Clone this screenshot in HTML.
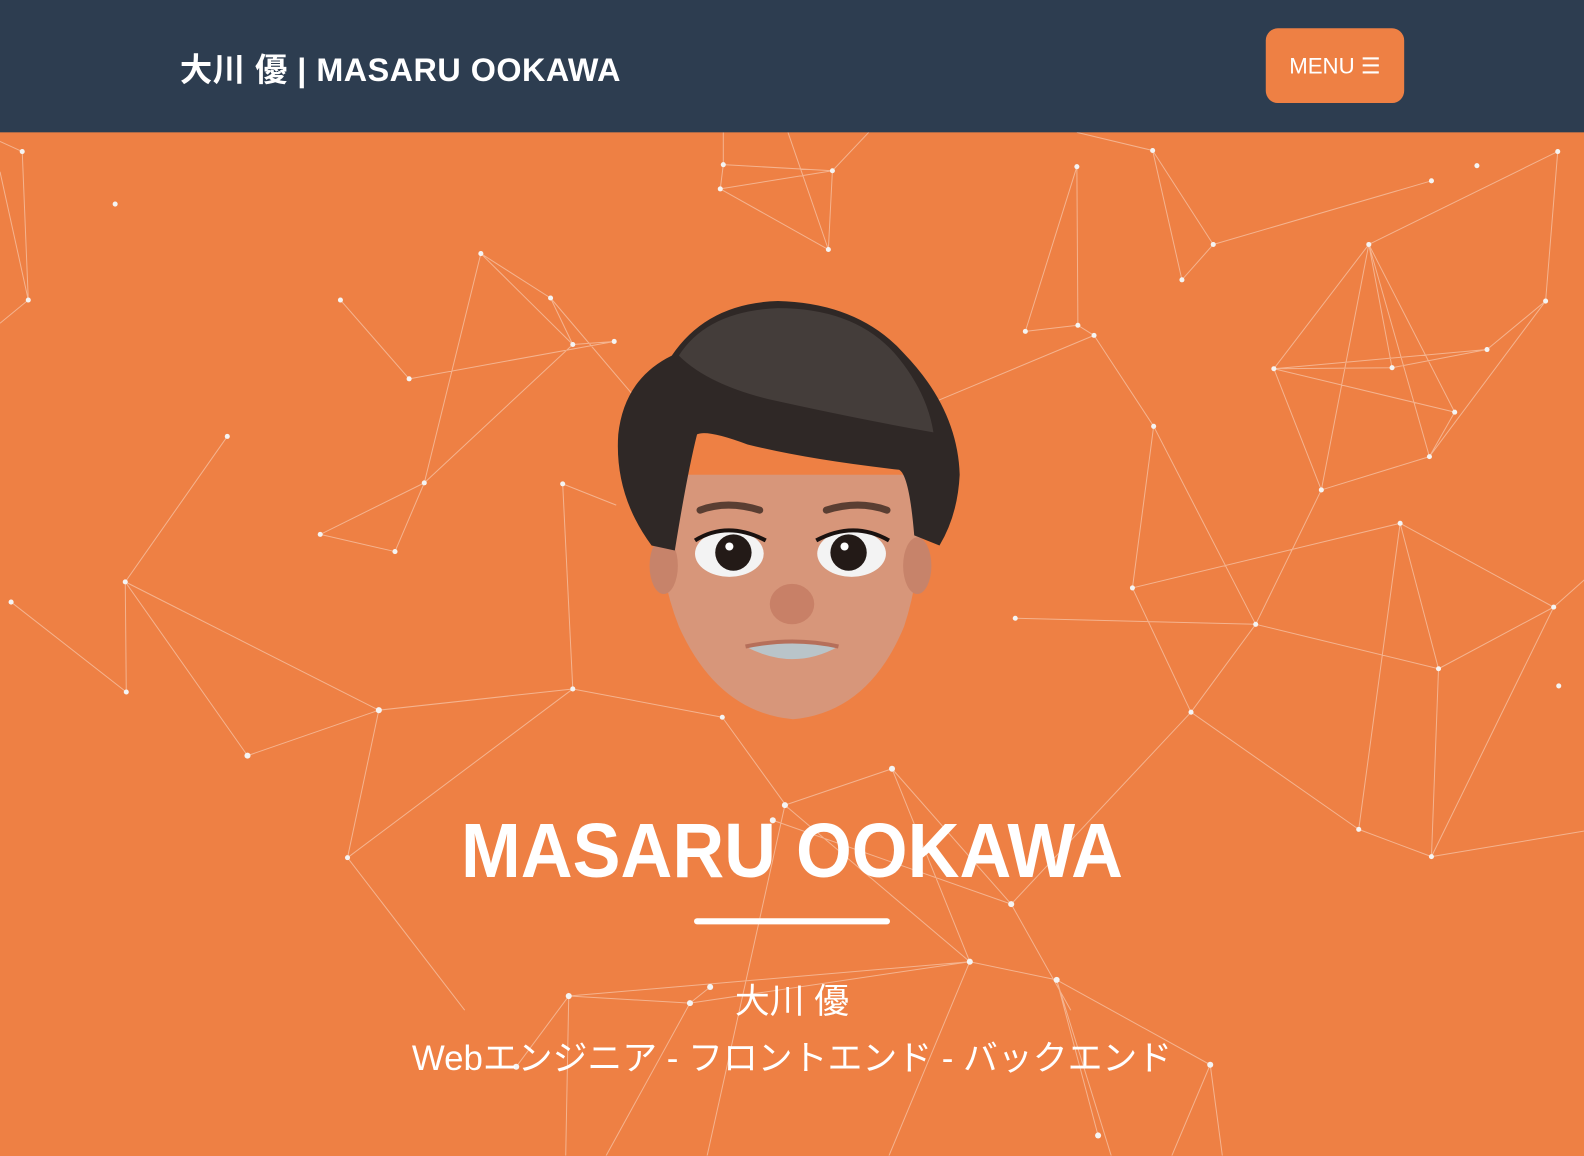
<!DOCTYPE html>
<html><head><meta charset="utf-8"><style>
html,body{margin:0;padding:0;width:1584px;height:1144px;overflow:hidden;background:#ee8044;font-family:"Liberation Sans","Noto Sans CJK JP",sans-serif}
#wrap{position:absolute;left:0;top:0;width:1568px;height:1133px;transform:scale(1.0102);transform-origin:0 0}
header{position:absolute;left:0;top:0;width:1568px;height:131px;background:#2d3d50;z-index:3}
.logo{position:absolute;left:178px;top:44px;color:#fff;font-weight:bold;font-size:32px;letter-spacing:0.5px;white-space:nowrap}
.menu{position:absolute;left:1253px;top:28px;width:137px;height:74px;background:#ee8044;border-radius:12px;color:#fff;font-size:22px;line-height:76px;text-align:center}
#net{position:absolute;left:0;top:0;z-index:1}
.t{position:absolute;left:0;width:1568px;text-align:center;color:#fff;z-index:2;white-space:nowrap}
h1{margin:0;font-size:76px;font-weight:bold;transform:scaleX(0.935);top:799px}
.bar{position:absolute;left:687px;top:909px;width:194px;height:6px;border-radius:3px;background:#fff;z-index:2}
</style></head><body><div id="wrap">
<header><div class="logo">大川 優 | MASARU OOKAWA</div><div class="menu">MENU ☰</div></header>
<svg id="net" width="1584" height="1144" viewBox="0 0 1584 1144">
<g stroke="rgba(255,255,255,0.4)" stroke-width="1" fill="none">
<path d="M22 150L28 297M0 140L22 150M0 320L28 297M0 170L28 297M337 297L405 375M476 251L545 295M476 251L567 341M545 295L567 341M567 341L608 338M545 295L630 395M476 251L420 478M567 341L420 478M420 478L317 529M420 478L391 546M317 529L391 546M405 375L608 338M225 432L124 576M11 596L125 685M124 576L125 685M124 576L375 703M124 576L245 748M245 748L375 703M375 703L567 682M375 703L344 849M557 479L567 682M557 479L610 500M567 682L715 710M715 710L780 800M567 682L344 849M344 849L460 1000M716 163L713 187M713 187L824 169M716 163L824 169M824 169L820 247M713 187L820 247M716 163L716 131M824 169L860 131M780 131L820 247M1066 165L1015 328M1066 165L1067 322M1067 322L1083 332M1015 328L1067 322M1141 149L1201 242M1201 242L1170 277M1066 131L1141 149M1141 149L1170 277M1083 332L1142 422M1083 332L920 400M1142 422L1121 582M1142 422L1243 618M1121 582L1179 705M1005 612L1243 618M1121 582L1386 518M1243 618L1179 705M1179 705L1345 821M1355 242L1261 365M1355 242L1378 364M1355 242L1440 408M1355 242L1415 452M1261 365L1378 364M1261 365L1440 408M1261 365L1472 346M1378 364L1472 346M1472 346L1530 298M1530 298L1542 150M1542 150L1355 242M1530 298L1415 452M1308 485L1415 452M1308 485L1261 365M1308 485L1355 242M1440 408L1415 452M1308 485L1243 618M1201 242L1417 179M1386 518L1538 601M1386 518L1424 662M1538 601L1424 662M1424 662L1417 848M1417 848L1538 601M1386 518L1345 821M1345 821L1417 848M1243 618L1424 662M1538 601L1584 560M1417 848L1584 820M883 761L777 797M883 761L1001 895M883 761L960 952M777 797L960 952M765 812L1001 895M960 952L1046 970M1046 970L1087 1124M1046 970L1198 1054M563 986L683 993M683 993L703 977M683 993L960 952M563 986L960 952M511 1056L563 986M563 986L560 1144M683 993L600 1144M777 797L700 1144M1198 1054L1210 1144M1179 705L1001 895M1046 970L1100 1144M1198 1054L1160 1144M960 952L880 1144M1001 895L1060 1000"/>
</g>
<g fill="#f4f4f4">
<circle cx="22" cy="150" r="2.5"/><circle cx="28" cy="297" r="2.5"/><circle cx="114" cy="202" r="2.5"/><circle cx="337" cy="297" r="2.5"/><circle cx="405" cy="375" r="2.5"/><circle cx="476" cy="251" r="2.5"/><circle cx="545" cy="295" r="2.5"/><circle cx="567" cy="341" r="2.5"/><circle cx="608" cy="338" r="2.5"/><circle cx="420" cy="478" r="2.5"/><circle cx="317" cy="529" r="2.5"/><circle cx="391" cy="546" r="2.5"/><circle cx="225" cy="432" r="2.5"/><circle cx="124" cy="576" r="2.5"/><circle cx="11" cy="596" r="2.5"/><circle cx="125" cy="685" r="2.5"/><circle cx="245" cy="748" r="3"/><circle cx="375" cy="703" r="3"/><circle cx="557" cy="479" r="2.5"/><circle cx="567" cy="682" r="2.5"/><circle cx="715" cy="710" r="2.5"/><circle cx="344" cy="849" r="2.5"/><circle cx="716" cy="163" r="2.5"/><circle cx="713" cy="187" r="2.5"/><circle cx="824" cy="169" r="2.5"/><circle cx="820" cy="247" r="2.5"/><circle cx="1066" cy="165" r="2.5"/><circle cx="1015" cy="328" r="2.5"/><circle cx="1067" cy="322" r="2.5"/><circle cx="1083" cy="332" r="2.5"/><circle cx="1141" cy="149" r="2.5"/><circle cx="1201" cy="242" r="2.5"/><circle cx="1170" cy="277" r="2.5"/><circle cx="1142" cy="422" r="2.5"/><circle cx="1121" cy="582" r="2.5"/><circle cx="1005" cy="612" r="2.5"/><circle cx="1243" cy="618" r="2.5"/><circle cx="1179" cy="705" r="2.5"/><circle cx="1355" cy="242" r="2.5"/><circle cx="1261" cy="365" r="2.5"/><circle cx="1378" cy="364" r="2.5"/><circle cx="1472" cy="346" r="2.5"/><circle cx="1440" cy="408" r="2.5"/><circle cx="1415" cy="452" r="2.5"/><circle cx="1308" cy="485" r="2.5"/><circle cx="1530" cy="298" r="2.5"/><circle cx="1542" cy="150" r="2.5"/><circle cx="1417" cy="179" r="2.5"/><circle cx="1462" cy="164" r="2.5"/><circle cx="1386" cy="518" r="2.5"/><circle cx="1538" cy="601" r="2.5"/><circle cx="1424" cy="662" r="2.5"/><circle cx="1345" cy="821" r="2.5"/><circle cx="1417" cy="848" r="2.5"/><circle cx="1543" cy="679" r="2.5"/><circle cx="883" cy="761" r="3"/><circle cx="777" cy="797" r="3"/><circle cx="765" cy="812" r="3"/><circle cx="1001" cy="895" r="3"/><circle cx="960" cy="952" r="3"/><circle cx="1046" cy="970" r="3"/><circle cx="563" cy="986" r="3"/><circle cx="683" cy="993" r="3"/><circle cx="703" cy="977" r="3"/><circle cx="1198" cy="1054" r="3"/><circle cx="511" cy="1056" r="3"/><circle cx="1087" cy="1124" r="3"/>
</g>
<g>
<path d="M650 470 Q648 560 672 620 Q710 705 785 712 Q860 705 895 620 Q915 560 912 470 Z" fill="#d7967a"/>
<ellipse cx="657" cy="560" rx="14" ry="28" fill="#c7836a"/>
<ellipse cx="908" cy="560" rx="14" ry="28" fill="#c7836a"/>
<path d="M645 540 Q608 490 612 430 Q618 375 665 352 Q700 300 770 298 Q850 300 895 350 Q948 405 950 470 Q948 510 930 540 L905 530 Q900 470 890 465 Q800 455 740 440 Q700 425 690 430 Q680 470 668 545 Z" fill="#2f2826"/>
<path d="M672 352 Q700 308 770 305 Q850 305 890 355 Q918 390 924 428 Q850 415 760 395 Q700 380 672 352Z" fill="#443d3a"/>
<path d="M693 505 Q720 495 752 505" stroke="#5a3e32" stroke-width="7" fill="none" stroke-linecap="round"/>
<path d="M818 505 Q850 495 878 505" stroke="#5a3e32" stroke-width="7" fill="none" stroke-linecap="round"/>
<ellipse cx="722" cy="548" rx="34" ry="23" fill="#f3f3f3"/>
<ellipse cx="843" cy="548" rx="34" ry="23" fill="#f3f3f3"/>
<circle cx="726" cy="547" r="18" fill="#231a17"/>
<circle cx="840" cy="547" r="18" fill="#231a17"/>
<circle cx="722" cy="541" r="4" fill="#fff"/><circle cx="836" cy="541" r="4" fill="#fff"/>
<path d="M688 535 Q720 515 758 535" stroke="#1a1210" stroke-width="4" fill="none"/>
<path d="M808 535 Q845 515 880 535" stroke="#1a1210" stroke-width="4" fill="none"/>
<ellipse cx="784" cy="598" rx="22" ry="20" fill="#c88067"/>
<path d="M738 640 Q785 628 830 640 Q785 665 738 640Z" fill="#b9c4c9"/>
<path d="M738 640 Q785 630 830 640" stroke="#b66f5a" stroke-width="4" fill="none"/>
</g>
</svg>
<h1 class="t">MASARU OOKAWA</h1>
<div class="bar"></div>
<div class="t" style="top:963px;font-size:34.5px">大川 優</div>
<div class="t" style="top:1019px;font-size:34.5px">Webエンジニア - フロントエンド - バックエンド</div>
</div></body></html>
